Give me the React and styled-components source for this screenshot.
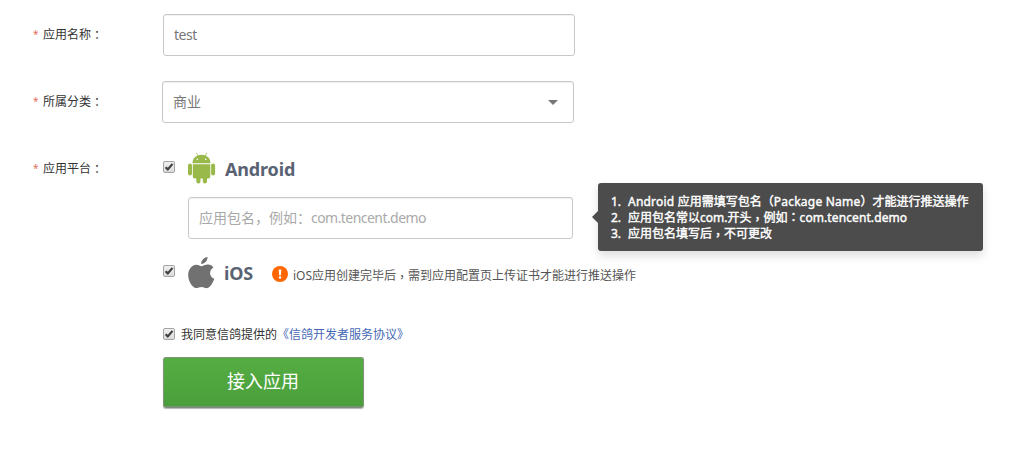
import React from "react";
import styled, { createGlobalStyle } from "styled-components";

const GlobalStyle = createGlobalStyle`
  * { box-sizing: border-box; }
  body {
    margin: 0;
    background: #fff;
    color: #333;
    font: 12px/16px "Noto Sans", "Noto Sans CJK SC", sans-serif;
  }
`;

const Form = styled.form`
  width: 1016px;
  height: 456px;
  padding: 14px 0 0 33px;
  overflow: hidden;
`;

const Row = styled.div`
  display: grid;
  grid-template-columns: ${(p) => p.$label || 129}px 1fr;
  height: ${(p) => p.$height}px;
`;

const Label = styled.div`
  display: flex;
  height: 16px;
  margin-top: ${(p) => p.$top}px;
  white-space: nowrap;
`;

const Star = styled.span`
  width: 10px;
  color: #e0705c;
  font-size: 10px;
  line-height: 15px;
`;

const Punct = styled.span`
  font-family: "Noto Sans CJK TC", sans-serif;
`;

const Comma = styled(Punct)`
  line-height: 0;
  vertical-align: -2px;
`;

const boxed = `
  height: 42px;
  border: 1px solid #c8c8c8;
  border-radius: 3px;
  background: #fff;
  box-shadow: inset 0 1px 1px rgba(0, 0, 0, 0.06);
  color: #777;
  font: 14px/20px "Noto Sans", "Noto Sans CJK SC", sans-serif;
  outline: 0;
`;

const Input = styled.input`
  ${boxed}
  display: block;
  width: 412px;
  padding: 0 10px 2px;
  letter-spacing: -0.5px;
`;

const PackageInput = styled.div`
  ${boxed}
  display: flex;
  align-items: center;
  width: 385px;
  padding: 0 10px 1px;
  color: #a9a9a9;
`;

const Latin = styled.span`
  letter-spacing: ${(p) => p.$spacing}px;
`;

const Select = styled.div`
  ${boxed}
  display: flex;
  align-items: center;
  justify-content: space-between;
  width: 412px;
  padding: 0 15px 0 10px;
`;

const Caret = styled.i`
  border: 5px solid transparent;
  border-top-color: #777;
  border-bottom: 0;
`;

const Platforms = styled.div`
  padding-left: 1px;
`;

const Platform = styled.div`
  display: flex;
  height: ${(p) => p.$height}px;
`;

const Check = styled.span`
  display: block;
  flex: none;
  width: 12px;
  height: 12px;
  margin-top: ${(p) => p.$top}px;
  margin-right: ${(p) => p.$gap}px;
  border: 1px solid #a3a3a3;
  border-radius: 2px;
  background: linear-gradient(#f0f0f0, #dcdcdc);
  svg { display: block; width: 10px; height: 10px; }
`;

const Icon = styled.svg`
  display: block;
  flex: none;
  width: ${(p) => p.$width}px;
  height: 33px;
  margin-top: ${(p) => p.$top || 0}px;
`;

const Name = styled.strong`
  width: ${(p) => p.$width}px;
  margin-left: 9px;
  padding-top: 5px;
  color: #596373;
  font-size: 18px;
  line-height: 24px;
  letter-spacing: -0.15px;
`;

const Package = styled.div`
  display: flex;
  height: 59px;
  padding-left: 25px;
`;

const Tip = styled.div`
  position: relative;
  width: 385px;
  height: 68px;
  margin: -14px 0 0 25px;
  padding: 11px 0 0 13px;
  border-radius: 3px;
  background: #4c4c4c;
  box-shadow: 0 5px 10px rgba(0, 0, 0, 0.13);
  color: #fff;
  -webkit-text-stroke: 0.4px #fff;
  white-space: nowrap;
  &::before {
    content: "";
    position: absolute;
    left: -6px;
    top: 28px;
    border: 6px solid transparent;
    border-right-color: #4c4c4c;
    border-left: 0;
  }
`;

const TipLine = styled.div`
  display: flex;
  height: 16px;
  line-height: 15px;
  > span { width: 17px; }
  ${Punct} { line-height: 0; }
`;

const Notice = styled.div`
  display: flex;
  padding-top: 10px;
  color: #555;
  line-height: 19px;
  white-space: nowrap;
  svg { width: 16px; height: 16px; margin-right: 5px; }
`;

const Agreement = styled.div`
  display: flex;
  height: 31px;
  padding-left: 130px;
  line-height: 18px;
`;

const Link = styled.a`
  color: #4668b4;
  text-decoration: none;
`;

const Submit = styled.button`
  display: block;
  width: 201px;
  height: 51px;
  margin-left: 129.5px;
  padding: 0 0 4px;
  border: 1px solid #82937c;
  border-bottom: 2px solid #7b8f76;
  border-radius: 3px;
  background: linear-gradient(#54ad42, #4b9f3b);
  box-shadow: 0 1px 1px rgba(0, 0, 0, 0.3);
  color: #fff;
  font: 18px/24px "Noto Sans CJK SC", sans-serif;
`;

function Checkbox({ top, gap }) {
  return (
    <Check $top={top} $gap={gap} role="checkbox" aria-checked="true">
      <svg viewBox="0 0 10 10">
        <path d="M1.6 5.2 3.8 7.4 8.5 1.9" fill="none" stroke="#404040" strokeWidth="2.2" />
      </svg>
    </Check>
  );
}

function AndroidIcon() {
  return (
    <Icon $width={28} viewBox="0 0 28 33">
      <g fill="#99b94b">
        <path d="M4.500 11.200C4.500 7.300 6.600 4.800 9.500 3.500L7.800.8l.5-.3 1.800 2.700a11 11 0 0 1 6.800 0L18.700.5l.5.3L17.500 3.500c2.900 1.300 5 3.800 5 7.700Z" />
        <path d="M4.800 12.200h17.500v12.200a2 2 0 0 1-2 2h-1.300V29.500a2.100 2.100 0 0 1-4.200 0v-3.100h-2.300V29.500a2.100 2.100 0 0 1-4.200 0v-3.100H6.800a2 2 0 0 1-2-2Z" />
        <rect x="0" y="11.500" width="4" height="12" rx="2" />
        <rect x="23.100" y="11.500" width="4" height="12" rx="2" />
      </g>
      <circle cx="9.300" cy="7.2" r=".8" fill="#fff" />
      <circle cx="17.700" cy="7.2" r=".8" fill="#fff" />
    </Icon>
  );
}

function AppleIcon() {
  return (
    <Icon $width={27} $top={1} viewBox="0 0 27 33">
      <g fill="#717171">
        <path d="M19.5 0c.3 3.4-2.8 7-6.3 6.9C12.9 3.6 16 .5 19.5 0Z" />
        <path d="M13.700 9.200c1.500 0 3.500-1.700 6.300-1.600 2.300.1 4.300 1.100 5.400 2.800-4.900 3-4.100 9.500.9 11.400-1 3-3.600 8.300-6.700 9.300-2.200.5-3.500-1.200-5.900-1.200-2.500 0-3.700 1.300-5.700 1.200C4.500 30.900.4 24.500.2 18.600.1 11.800 4.300 7.900 8.200 7.800c2.300-.1 4.100 1.400 5.500 1.400Z" />
      </g>
    </Icon>
  );
}

export default function App() {
  return (
    <>
      <GlobalStyle />
      <Form onSubmit={(e) => e.preventDefault()}>
        <Row $label={130} $height={67}>
          <Label $top={13}><Star>*</Star>应用名称<Punct>：</Punct></Label>
          <Input defaultValue="test" />
        </Row>
        <Row $height={71}>
          <Label $top={13}><Star>*</Star>所属分类<Punct>：</Punct></Label>
          <Select>商业<Caret /></Select>
        </Row>
        <Row $height={174}>
          <Label $top={9}><Star>*</Star>应用平台<Punct>：</Punct></Label>
          <Platforms>
            <Platform $height={45}>
              <Checkbox top={9} gap={13} />
              <AndroidIcon />
              <Name $width={90}>Android</Name>
            </Platform>
            <Package>
              <PackageInput>应用包名，例如：<Latin $spacing={-0.55}>com.tencent.demo</Latin></PackageInput>
              <Tip>
                <TipLine>
                  <span>1.</span>
                  <div>
                    <Latin $spacing={0.22}>Android </Latin>应用需填写包名<Punct>（</Punct>
                    <Latin $spacing={0.22}>Package Name</Latin><Punct>）</Punct>才能进行推送操作
                  </div>
                </TipLine>
                <TipLine>
                  <span>2.</span>
                  <div>
                    应用包名常以com.开头<Comma>，</Comma>例如<Punct>：</Punct>
                    <Latin $spacing={0.1}>com.tencent.demo</Latin>
                  </div>
                </TipLine>
                <TipLine><span>3.</span><div>应用包名填写后<Comma>，</Comma>不可更改</div></TipLine>
              </Tip>
            </Package>
            <Platform $height={70}>
              <Checkbox top={9} gap={13} />
              <AppleIcon />
              <Name $width={48}>iOS</Name>
              <Notice>
                <svg viewBox="0 0 16 16">
                  <circle cx="8" cy="8" r="8" fill="#ff6600" />
                  <path d="M6.700 3.500h2.600L8.900 9.300H7.100Z" fill="#fff" />
                  <circle cx="8" cy="11.500" r="1.300" fill="#fff" />
                </svg>
                <span>iOS应用创建完毕后<Comma>，</Comma>需到应用配置页上传证书才能进行推送操作</span>
              </Notice>
            </Platform>
          </Platforms>
        </Row>
        <Agreement>
          <Checkbox top={2} gap={6} />
          <span>我同意信鸽提供的<Link>《信鸽开发者服务协议》</Link></span>
        </Agreement>
        <Submit>接入应用</Submit>
      </Form>
    </>
  );
}
